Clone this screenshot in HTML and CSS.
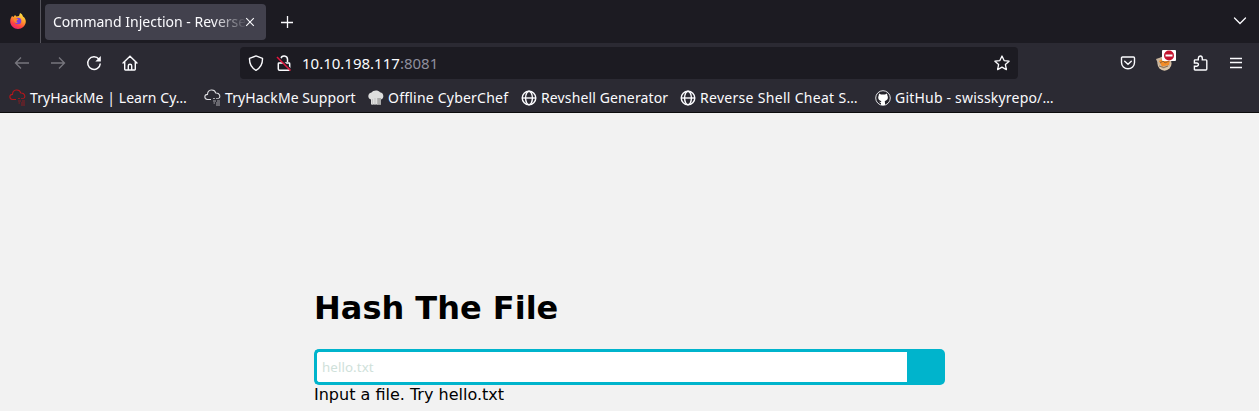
FILE: index.html
```
<!DOCTYPE html>
<html lang="en">
<head>
<meta charset="utf-8">
<title>Command Injection - Reverse Shell</title>
<link rel="stylesheet" href="styles.css">
</head>
<body>
<svg class="defs" width="0" height="0">
  <defs>
    <linearGradient id="flame" x1=".8" y1="0" x2=".3" y2="1"><stop offset="0" stop-color="#fff04a"/><stop offset=".4" stop-color="#ffa12c"/><stop offset=".75" stop-color="#ff4340"/><stop offset="1" stop-color="#e8207a"/></linearGradient>
    <symbol id="globe" viewBox="0 0 16 16"><g fill="none" stroke="#fbfbfe" stroke-width="1.4"><circle cx="8" cy="8" r="6.8"/><ellipse cx="8" cy="8" rx="3.4" ry="6.8"/><path d="M1.5 8h13"/></g></symbol>
    <symbol id="cloud" viewBox="0 0 18 18"><path d="M7 10.500H3.500C-.2 10 .1 5.500 3.500 5.400 3.600 0 10.500-.3 11.800 4c4.200-.2 4.800 3.600 3.200 5.200" fill="none" stroke="currentColor" stroke-width="1.100"/><path d="M9 9.500h2m1 0h3M9 12h3m1 0h3M9.500 14h1.500m1 0h4M12 16h4" stroke="currentColor" stroke-width="1" opacity=".7"/></symbol>
  </defs>
</svg>
<header class="browser">
  <div class="tabs">
    <div class="pinned">
      <svg width="16" height="16" viewBox="0 0 16 16"><path d="M2 3l1.500 1L5 2l1.500 1.600L9 3l1-3c2 1 2.500 2 3 3.500C15 4.500 16 7 15.800 9 15.300 13 12 16 8 16S.2 12.500.2 8.500C.2 6 1 4.500 2 3z" fill="url(#flame)"/><circle cx="8" cy="8" r="3.300" fill="#7a3fe0"/><path d="M3.500 5.500c2-1 4 0 4.800 1.200C6 7 6 9 8 9.700c-2 1-4 0-4.500-4.200z" fill="#ff8a26"/></svg>
    </div>
    <div class="tab">
      <span class="tab-title">Command Injection - Reverse</span>
      <svg class="close" width="10" height="10" viewBox="0 0 10 10"><path d="M1.200 1.200l7.600 7.600m0-7.600L1.200 8.800" stroke="#fbfbfe" stroke-width="1.100"/></svg>
    </div>
    <svg class="new-tab" width="14" height="14" viewBox="0 0 14 14"><path d="M1 7.500h12M7.500 1v12" stroke="#fbfbfe" stroke-width="1.300"/></svg>
    <svg class="all-tabs" width="14" height="10" viewBox="0 0 14 10"><path d="M1.500 2L7 7.500 12.500 2" fill="none" stroke="#fbfbfe" stroke-width="1.300" stroke-linecap="round"/></svg>
  </div>
  <div class="toolbar">
    <div class="nav">
      <svg width="16" height="16" viewBox="0 0 16 16" class="off"><path d="M15 8H1.500M7 2.500L1.500 8 7 13.500"/></svg>
      <svg width="16" height="16" viewBox="0 0 16 16" class="off"><path d="M1 8h13.500M9 2.500L14.500 8 9 13.500"/></svg>
      <svg width="16" height="16" viewBox="0 0 16 16"><path d="M13 4.200A6.300 6.300 0 1 0 14.300 8.500" stroke-width="1.500"/><path d="M14.800 1v5.500H9.300z" fill="#fbfbfe" stroke="none"/></svg>
      <svg width="16" height="16" viewBox="0 0 16 16"><path d="M1 8l7-6.700L15 8M2.700 6.800v7.500q0 .7.700.7h9.200q.7 0 .7-.7V6.800M6.300 15v-4.300q0-1.400 1.700-1.400t1.700 1.400V15" stroke-width="1.400" stroke-linecap="round"/></svg>
    </div>
    <div class="urlbar">
      <svg class="shield" width="16" height="16" viewBox="0 0 16 16"><path d="M8 .9l6.500 2.500C14.700 9 12.500 13 8 15.300 3.500 13 1.300 9 1.500 3.400z" stroke-width="1.400" stroke-linejoin="round"/></svg>
      <svg class="lock" width="16" height="16" viewBox="0 0 16 16"><path d="M5 3.500C5.500-.2 11.500.1 11.500 4.300V7M3 8h10q.7 0 .7.700V14q0 1.200-1.200 1.200h-9q-1.200 0-1.200-1.200V8.700Q2.300 8 3 8z" stroke-width="1.500"/><path class="slash-gap" d="M2 1.500L15.300 14.800"/><path class="slash" d="M1 2l13.500 13.500"/></svg>
      <span class="url">10.10.198.117<span class="port">:8081</span></span>
      <svg class="star" width="16" height="16" viewBox="0 0 16 16"><path d="M8 1l2.100 4.600 5 .6-3.700 3.400 1 5L8 12.100l-4.400 2.500 1-5L.9 6.200l5-.6z" stroke-width="1.300" stroke-linejoin="round"/></svg>
    </div>
    <div class="actions">
      <svg width="16" height="16" viewBox="0 0 16 16"><path d="M2.500 2h11q1 0 1 1v4.500a6.500 6.300 0 0 1-13 0V3q0-1 1-1zM4.700 6.200L8 9.300l3.300-3.100" stroke-width="1.400" stroke-linecap="round"/></svg>
      <svg width="20" height="22" viewBox="0 0 20 22"><ellipse cx="8.500" cy="13.500" rx="7" ry="7.200" fill="#dcc7ab" stroke="none"/><path d="M0 9l6-2 9 4-1 5-7 3-4-3z" fill="#c8b49c" stroke="none"/><path d="M3 11l5-3 6 2-1 5-7 1.500z" fill="#f28c28" stroke="none"/><path d="M4 13l3-2 2 2 4-2M3 16q5 3 9 0" stroke="#6e5135" stroke-width=".7"/><rect x="6" y="0" width="14" height="11" rx="1" fill="#fff" stroke="none"/><circle cx="13" cy="5.500" r="5" fill="#c4142f" stroke="none"/><path d="M9.500 5.500h7" stroke-width="2"/></svg>
      <svg width="16" height="16" viewBox="0 0 16 16"><path d="M2 15q-.6 0-.6-.6v-3.200h2.500q1.600-.3 1.600-1.600T3.900 8H1.400V5.500q0-.6.600-.6h3.300V3.200Q5.500 1.100 7.300 1t2 2.200v1.700h3.700q.8 0 .8.800V14q0 1-.9 1z" stroke-width="1.400"/></svg>
      <svg width="16" height="16" viewBox="0 0 16 16"><path d="M2 3.500h12M2 7.500h12M2 12.500h12" stroke-width="1.300"/></svg>
    </div>
  </div>
  <nav class="bookmarks">
    <a class="bm b1"><svg class="thm" width="18" height="18"><use href="#cloud"/></svg><span>TryHackMe | Learn Cy…</span></a>
    <a class="bm b2"><svg class="support" width="18" height="18"><use href="#cloud"/></svg><span>TryHackMe Support</span></a>
    <a class="bm b3"><svg width="16" height="16" viewBox="0 0 16 16"><path d="M3 14.500V9.500C-.8 9-.5 3 3.500 2.500 5-.2 10.500-.2 12 2.300c4 .2 4.500 6.500 1 7.200v5z" fill="#dedede"/><path d="M4.500 9v5.500M7 8v6.500M9.500 8v6.500" stroke="#c4c4c4"/><path d="M9.500 8H13v6.500H9.500z" fill="#aaa"/></svg><span>Offline CyberChef</span></a>
    <a class="bm b4"><svg width="16" height="16"><use href="#globe"/></svg><span>Revshell Generator</span></a>
    <a class="bm b5"><svg width="16" height="16"><use href="#globe"/></svg><span>Reverse Shell Cheat S…</span></a>
    <a class="bm b6"><svg width="16" height="16" viewBox="0 0 16 16"><circle cx="8" cy="8" r="7.300" fill="#24232a" stroke="#e0e0e4"/><path d="M4 3.500l2 1h4l2-1 .4 2c1.300 3-.2 5-2.600 5.500l.4 4H6v-2l-2.300-1.200L6 12l.3-1C3.600 10.500 2.500 8 3.700 5.500z" fill="#fff"/></svg><span>GitHub - swisskyrepo/…</span></a>
  </nav>
</header>
<main class="page">
  <h1>Hash The File</h1>
  <form class="search">
    <input type="text" placeholder="hello.txt" aria-label="File">
    <button type="button" aria-label="Submit"></button>
  </form>
  <p>Input a file. Try hello.txt</p>
</main>
</body>
</html>
```
FILE: styles.css
```
* { box-sizing: border-box; }
body { margin: 0; height: 411px; overflow: hidden; background: #f2f2f2; font-family: "DejaVu Sans", sans-serif; }
.defs { display: block; }
.browser { height: 113px; background: #2b2a33; color: #fbfbfe; border-bottom: 1px solid #0c0c0d; font: 14px/20px "Noto Sans", sans-serif; }
svg { flex: none; }
.tabs { height: 43px; display: flex; align-items: center; background: #1c1b22; }
.pinned { width: 41px; height: 43px; padding: 13px 0 0 10px; border-right: 1px solid #55545c; }
.tab { width: 221px; height: 36px; margin-left: 4px; padding-left: 8px; border-radius: 4px; background: #42414d; display: flex; align-items: center; }
.tab-title { width: 192px; overflow: hidden; white-space: nowrap; -webkit-mask-image: linear-gradient(to right, #000 160px, transparent 194px); mask-image: linear-gradient(to right, #000 160px, transparent 194px); }
.new-tab { margin-left: 14px; }
.all-tabs { margin: -2px 12px 0 auto; }
.toolbar { height: 40px; display: flex; align-items: center; padding: 0 15px 0 14px; }
.toolbar svg { fill: none; stroke: #fbfbfe; stroke-width: 1.3; }
.nav { display: flex; gap: 20px; width: 226px; }
.toolbar .off { stroke: #77767e; }
.urlbar { width: 778px; height: 32px; border-radius: 4px; background: #1c1b22; display: flex; align-items: center; padding: 0 8px; }
.lock { margin-left: 12px; }
.slash-gap { stroke: #1c1b22; stroke-width: 1.5; }
.slash { stroke: #e5173f; stroke-width: 1.5; }
.url { margin-left: 10px; font-size: 15px; }
.port { color: #8f8f9d; }
.star { margin-left: auto; }
.actions { margin-left: auto; display: flex; align-items: center; gap: 19px; }
.actions svg:nth-child(1) { margin-right: 1px; }
.actions svg:nth-child(2) { margin: -4px -2px 0 0; }
.bookmarks { height: 29px; display: flex; align-items: center; padding-left: 9px; }
.bm { display: flex; align-items: center; gap: 3px; white-space: nowrap; }
.bm span { line-height: 20px; }
.thm { color: #b5161b; }
.support { color: #dcdce0; }
.b1 { width: 195px; letter-spacing: .06px; }
.b2 { width: 164px; letter-spacing: .07px; }
.b3 { width: 153px; gap: 4px; letter-spacing: .22px; }
.b4 { width: 159px; gap: 4px; letter-spacing: .13px; }
.b5 { width: 195px; gap: 4px; letter-spacing: .3px; }
.b6 { gap: 4px; letter-spacing: .2px; }
.page { width: 631px; margin: 0 0 0 314px; padding-top: 176px; }
h1 { margin: 0; font-size: 32px; line-height: 38px; }
.search { display: flex; height: 36px; margin: 22px 0 0; }
.search input { width: 593px; border: 3px solid #00b4cc; border-right: 0; border-radius: 5px 0 0 5px; padding: 2px 5px; background: #fff; font: 13.3px "Noto Sans", sans-serif; letter-spacing: .1px; outline: 0; }
.search input::placeholder { color: #cfe1da; opacity: 1; }
.search button { width: 38px; border: 0; border-radius: 0 5px 5px 0; background: #00b4cc; padding: 0; }
p { margin: 0; font-size: 16px; line-height: 19px; }
```
